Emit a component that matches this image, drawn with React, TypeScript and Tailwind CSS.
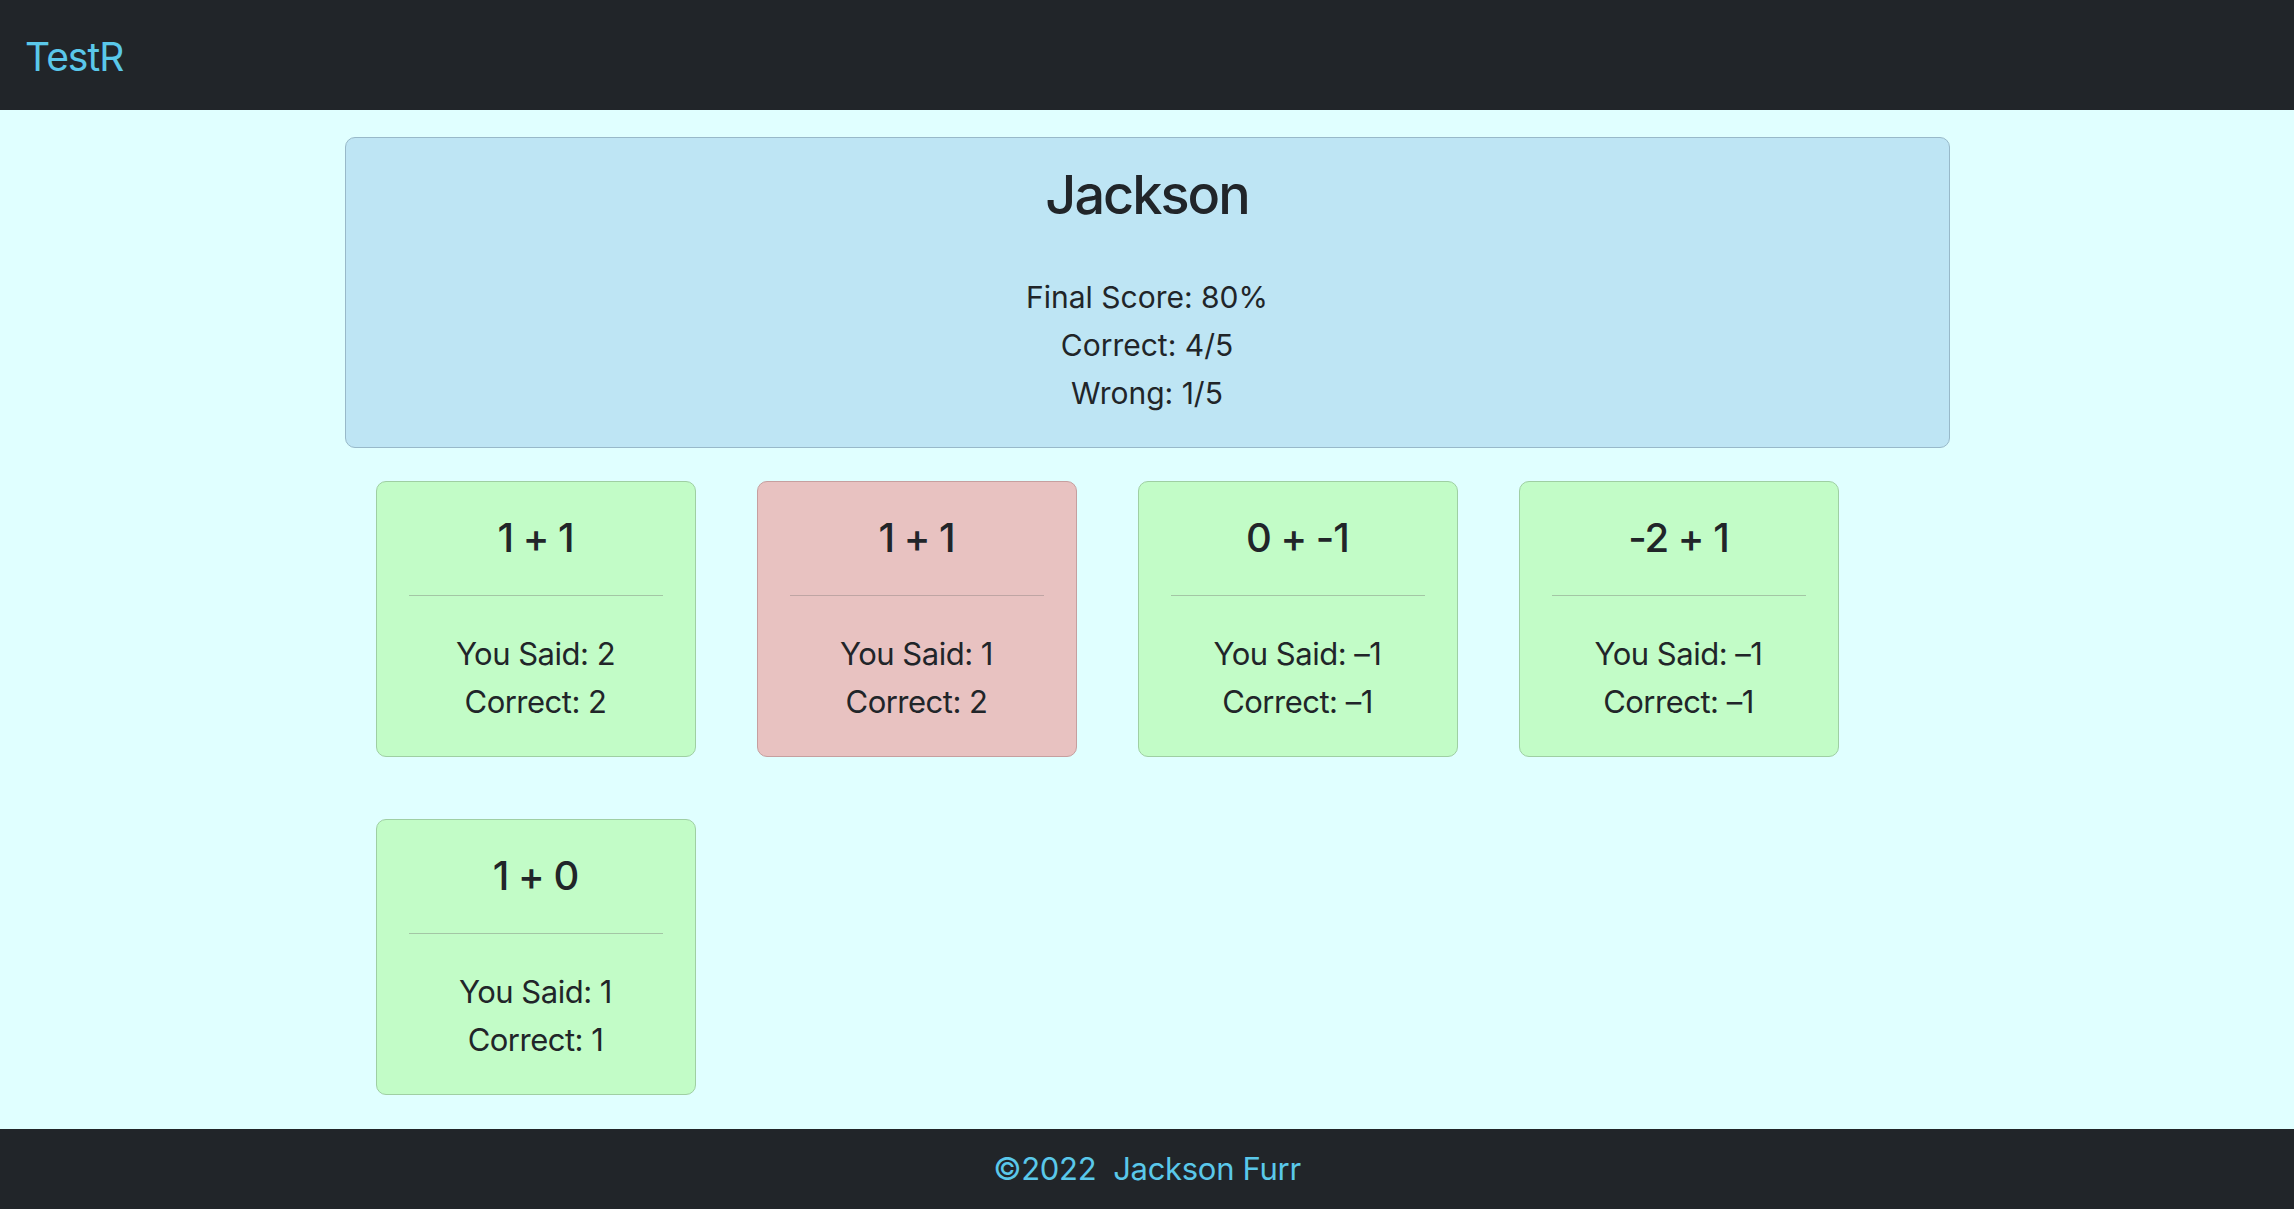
import React from "react";

type Answer = {
  question: string;
  said: string;
  correct: string;
};

const answers: Answer[] = [
  { question: "1 + 1", said: "2", correct: "2" },
  { question: "1 + 1", said: "1", correct: "2" },
  { question: "0 + -1", said: "-1", correct: "-1" },
  { question: "-2 + 1", said: "-1", correct: "-1" },
  { question: "1 + 0", said: "1", correct: "1" },
];

function AnswerCard({ answer }: { answer: Answer }) {
  const right = answer.said === answer.correct;
  return (
    <div
      className={
        right
          ? "w-[320px] rounded-[10px] border border-[#9fcfa3] bg-[#c2fcc7] px-[32px] pt-[32px] pb-[30px] text-center"
          : "w-[320px] rounded-[10px] border border-[#c69f9f] bg-[#e8c2c1] px-[32px] pt-[32px] pb-[30px] text-center"
      }
    >
      <h5 className="text-[40px] leading-[48px] font-medium tracking-[-1px]">{answer.question}</h5>
      <hr
        className={
          right
            ? "mt-[33px] mb-[34px] border-t border-[#a3c6a5]"
            : "mt-[33px] mb-[34px] border-t border-[#bfa5a4]"
        }
      />
      <p className="text-[31px] leading-[48px] tracking-[-0.5px]">You Said: {answer.said.replace("-", "–")}</p>
      <p className="text-[31px] leading-[48px] tracking-[-0.5px]">Correct: {answer.correct.replace("-", "–")}</p>
    </div>
  );
}

export default function App() {
  const total = answers.length;
  const right = answers.filter((a) => a.said === a.correct).length;

  return (
    <div className="min-h-screen flex flex-col bg-[#e0ffff] text-[#212529] font-['Inter','Liberation_Sans',sans-serif]">
      <nav className="h-[110px] shrink-0 bg-[#212529] px-[25px] flex items-center">
        <span className="text-[39px] text-[#5ac8ea] tracking-[-1px] pt-[4px]">TestR</span>
      </nav>

      <main className="flex-1">
        <div className="mx-auto mt-[27px] w-[1605px] rounded-[10px] border border-[#98b9c9] bg-[#bee5f4] pt-[23px] pb-[30px] text-center">
          <h3 className="text-[54px] leading-[67px] font-medium tracking-[-2px]">Jackson</h3>
          <div className="mt-[45px] text-[30px] leading-[48px]">
            <p>Final Score: {Math.round((right / total) * 100)}%</p>
            <p>
              Correct: {right}/{total}
            </p>
            <p>
              Wrong: {total - right}/{total}
            </p>
          </div>
        </div>

        <div className="mx-auto w-[1605px] flex flex-wrap gap-x-[61px] gap-y-[62px] pl-[31px] pt-[33px] pb-[31px]">
          {answers.map((a, i) => (
            <AnswerCard key={i} answer={a} />
          ))}
        </div>
      </main>

      <footer className="h-[80px] shrink-0 bg-[#212529] flex items-center justify-center">
        <span className="text-[31px] text-[#5ac8ea] whitespace-pre tracking-[-0.3px]">©2022  Jackson Furr</span>
      </footer>
    </div>
  );
}
